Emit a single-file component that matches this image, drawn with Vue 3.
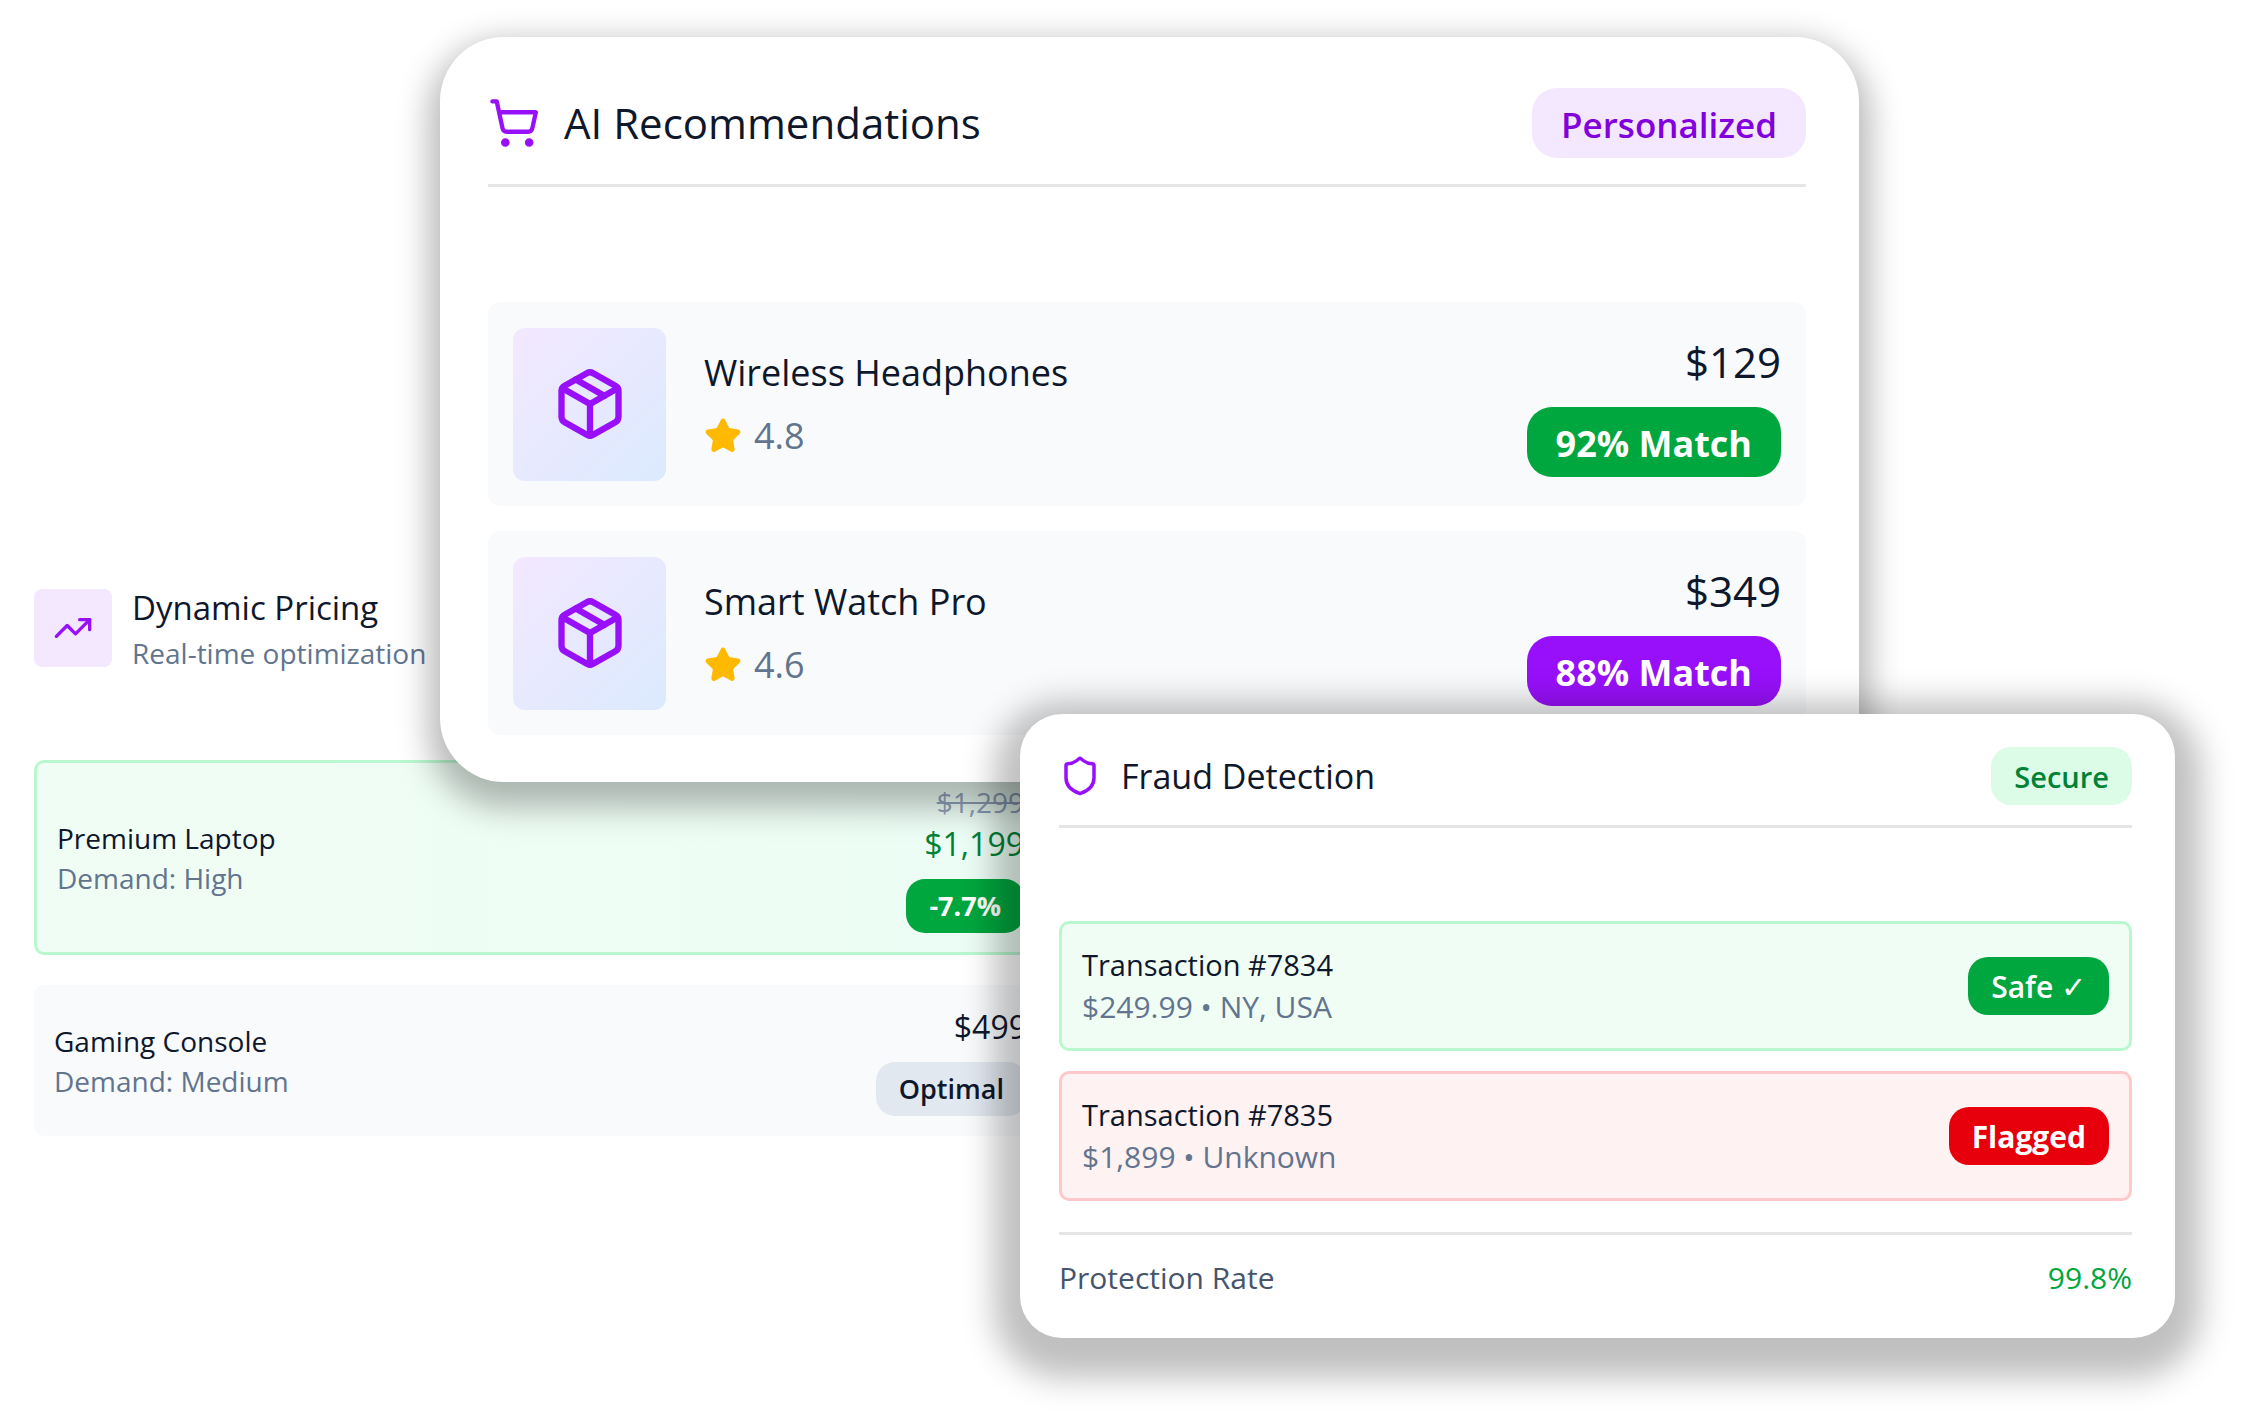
<script setup>
const products = [
  { name: 'Wireless Headphones', rating: '4.8', price: '$129', match: '92% Match', tone: 'green' },
  { name: 'Smart Watch Pro', rating: '4.6', price: '$349', match: '88% Match', tone: 'purple' },
]

const transactions = [
  { title: 'Transaction #7834', detail: '$249.99 • NY, USA', status: 'Safe', mark: '✓', row: 'safe', tone: 'green' },
  { title: 'Transaction #7835', detail: '$1,899 • Unknown', status: 'Flagged', mark: '', row: 'flagged', tone: 'red strong' },
]
</script>

<template>
  <main class="stage">
    <section class="pricing">
      <header class="pricing-head">
        <span class="pricing-icon">
          <svg viewBox="0 0 24 24" width="40" height="40" class="stroke" aria-hidden="true">
            <path d="M16 7h6v6" />
            <path d="m22 7-8.500 8.500-5-5L2 17" />
          </svg>
        </span>
        <div>
          <h2 class="pricing-title">Dynamic Pricing</h2>
          <p class="pricing-sub">Real-time optimization</p>
        </div>
      </header>

      <article class="offer offer-deal">
        <div>
          <h3 class="offer-name">Premium Laptop</h3>
          <p class="offer-demand">Demand: High</p>
        </div>
        <div class="offer-side">
          <del class="offer-old">$1,299</del>
          <span class="offer-price deal">$1,199</span>
          <span class="pill pill-small green strong">-7.7%</span>
        </div>
      </article>

      <article class="offer offer-plain">
        <div>
          <h3 class="offer-name">Gaming Console</h3>
          <p class="offer-demand">Demand: Medium</p>
        </div>
        <div class="offer-side">
          <span class="offer-price">$499</span>
          <span class="pill pill-small slate">Optimal</span>
        </div>
      </article>
    </section>

    <section class="card recs">
      <header class="recs-head">
        <svg viewBox="0 0 24 24" width="52" height="52" class="stroke" aria-hidden="true">
          <circle cx="8" cy="21" r="1" />
          <circle cx="19" cy="21" r="1" />
          <path d="M2.050 2.050h2l2.660 12.420a2 2 0 0 0 2 1.580h9.780a2 2 0 0 0 1.950-1.570l1.650-7.430H5.120" />
        </svg>
        <h2 class="recs-title">AI Recommendations</h2>
        <span class="pill pill-large lilac">Personalized</span>
      </header>

      <article v-for="p in products" :key="p.name" class="product">
        <span class="product-tile">
          <svg viewBox="0 0 24 24" width="76" height="76" class="stroke" aria-hidden="true">
            <path d="M11 21.730a2 2 0 0 0 2 0l7-4A2 2 0 0 0 21 16V8a2 2 0 0 0-1-1.730l-7-4a2 2 0 0 0-2 0l-7 4A2 2 0 0 0 3 8v8a2 2 0 0 0 1 1.730z" />
            <path d="M12 22V12" />
            <path d="M3.290 7 12 12l8.710-5" />
            <path d="m7.500 4.270 9 5.150" />
          </svg>
        </span>
        <div class="product-text">
          <h3 class="product-name">{{ p.name }}</h3>
          <p class="product-rating">
            <svg viewBox="0 0 24 24" width="38" height="38" class="star" aria-hidden="true">
              <path d="M11.525 2.295a.53.53 0 0 1 .95 0l2.310 4.679a2.123 2.123 0 0 0 1.595 1.160l5.166.756a.53.53 0 0 1 .294.904l-3.736 3.638a2.123 2.123 0 0 0-.611 1.878l.882 5.140a.53.53 0 0 1-.771.560l-4.618-2.428a2.122 2.122 0 0 0-1.973 0L6.396 21.010a.53.53 0 0 1-.770-.560l.881-5.139a2.122 2.122 0 0 0-.611-1.879L2.160 9.795a.53.53 0 0 1 .294-.906l5.165-.755a2.122 2.122 0 0 0 1.597-1.160z" />
            </svg>
            {{ p.rating }}
          </p>
        </div>
        <div class="product-side">
          <span class="product-price">{{ p.price }}</span>
          <span class="pill pill-large strong" :class="p.tone">{{ p.match }}</span>
        </div>
      </article>
    </section>

    <section class="card fraud">
      <header class="fraud-head">
        <svg viewBox="0 0 24 24" width="42" height="42" class="stroke" aria-hidden="true">
          <path d="M20 13c0 5-3.500 7.500-7.660 8.950a1 1 0 0 1-.670-.010C7.500 20.500 4 18 4 13V6a1 1 0 0 1 1-1c2 0 4.500-1.200 6.240-2.720a1.170 1.170 0 0 1 1.520 0C14.510 3.810 17 5 19 5a1 1 0 0 1 1 1z" />
        </svg>
        <h2 class="fraud-title">Fraud Detection</h2>
        <span class="pill pill-medium mint">Secure</span>
      </header>

      <article v-for="t in transactions" :key="t.title" class="transaction" :class="t.row">
        <div>
          <h3 class="transaction-title">{{ t.title }}</h3>
          <p class="transaction-detail">{{ t.detail }}</p>
        </div>
        <span class="pill pill-medium" :class="t.tone">{{ t.status }}<span v-if="t.mark" class="mark">&nbsp;{{ t.mark }}</span></span>
      </article>

      <footer class="fraud-foot">
        <span>Protection Rate</span>
        <span class="rate">99.8%</span>
      </footer>
    </section>
  </main>
</template>

<style>
body {
  margin: 0;
  background: #ffffff;
}
</style>

<style scoped>
.stage {
  display: grid;
  grid-template-columns: minmax(0, 1fr);
  align-items: start;
  min-height: 100vh;
  box-sizing: border-box;
  overflow: hidden;
  color: #0f172b;
  font-family: "Open Sans", "Noto Sans", sans-serif;
  white-space: nowrap;
}

/* The three panels share one grid cell and overlap in source order. */
.stage > section {
  grid-area: 1 / 1;
}

h2,
h3,
p {
  margin: 0;
  font-weight: 400;
}

svg {
  display: block;
  flex: none;
}

.stroke {
  fill: none;
  stroke: #9810fa;
  stroke-width: 2;
  stroke-linecap: round;
  stroke-linejoin: round;
}

.card {
  background: #ffffff;
}

.pill {
  display: block;
  flex: none;
  font-weight: 600;
}

.strong {
  font-weight: 700;
}

.pill-small {
  padding: 0 23px;
  border-radius: 19px;
  font-size: 27px;
  line-height: 54px;
}

.pill-medium {
  padding: 2px 23px 0;
  border-radius: 20px;
  font-size: 30px;
  line-height: 56px;
}

.pill-large {
  padding: 4px 29px 0;
  border-radius: 25px;
  font-size: 36px;
  line-height: 66px;
}

.mark {
  font-weight: 400;
}

.green {
  background: #00a63e;
  color: #ffffff;
}

.purple {
  background: #9810fa;
  color: #ffffff;
}

.red {
  background: #e7000b;
  color: #ffffff;
}

.slate {
  background: #e2e8f0;
  color: #0f172b;
}

.lilac {
  background: #f3e8ff;
  color: #8200db;
  font-size: 35px;
}

.mint {
  background: #dcfce7;
  color: #008236;
  font-size: 29px;
}

/* Dynamic pricing */
.pricing {
  margin: 582px 1196px 0 34px;
}

.pricing-head {
  display: flex;
  align-items: center;
  gap: 20px;
  margin-bottom: 86px;
}

.pricing-icon {
  display: grid;
  place-items: center;
  width: 78px;
  height: 78px;
  border-radius: 8px;
  background: #f3e8ff;
}

.pricing-title {
  padding-top: 2px;
  font-size: 33px;
  line-height: 48px;
}

.pricing-sub {
  color: #62748e;
  font-size: 28px;
  line-height: 42px;
}

.offer {
  display: flex;
  align-items: center;
  justify-content: space-between;
  padding: 20px;
  border-radius: 10px;
}

.offer-deal {
  margin-bottom: 30px;
  padding: 19px 20px;
  border: 3px solid #b9f8cf;
  background: linear-gradient(90deg, #f0fdf4, #ecfdf5);
}

.offer-plain {
  background: #f8fafc;
}

.offer-name,
.offer-demand {
  font-size: 28px;
  line-height: 40px;
}

.offer-demand {
  color: #62748e;
}

.offer-side {
  display: flex;
  flex-direction: column;
  align-items: flex-end;
}

.offer-old {
  color: #90a1b9;
  font-size: 28px;
  line-height: 40px;
}

.offer-price {
  margin-bottom: 13px;
  font-size: 32px;
  line-height: 44px;
}

.deal {
  color: #008236;
}

/* AI recommendations */
.recs {
  margin: 37px 384px 0 440px;
  padding: 51px 53px 47px 48px;
  border-radius: 64px;
  box-shadow: 0 15px 32px 11px rgba(0, 0, 0, 0.28);
}

.recs-head {
  display: flex;
  align-items: center;
  margin-bottom: 115px;
  padding-bottom: 26px;
  border-bottom: 3px solid #e5e5e5;
}

.recs-title {
  flex: 1;
  margin-left: 24px;
  font-size: 42px;
  line-height: 60px;
}

.product {
  display: flex;
  align-items: center;
  height: 204px;
  box-sizing: border-box;
  padding: 0 25px;
  border-radius: 12px;
  background: #f8fafc;
}

.product + .product {
  margin-top: 25px;
}

.product-tile {
  display: grid;
  place-items: center;
  width: 153px;
  height: 153px;
  border-radius: 12px;
  background: linear-gradient(135deg, #f3e8ff, #dbeafe);
}

.product-text {
  flex: 1;
  margin-left: 38px;
}

.product-name {
  font-size: 36px;
  line-height: 63px;
}

.product-rating {
  display: flex;
  align-items: center;
  gap: 12px;
  color: #62748e;
  font-size: 36px;
  line-height: 63px;
}

.star {
  fill: #ffb900;
  stroke: #ffb900;
  stroke-width: 2;
  stroke-linejoin: round;
}

.product-side {
  display: flex;
  flex-direction: column;
  align-items: flex-end;
  gap: 15px;
}

.product-price {
  font-size: 42px;
  line-height: 60px;
}

/* Fraud detection */
.fraud {
  margin: 714px 68px 0 1020px;
  padding: 33px 43px 38px 39px;
  border-radius: 42px;
  box-shadow: 0 14px 32px 26px rgba(0, 0, 0, 0.25);
}

.fraud-head {
  display: flex;
  align-items: center;
  margin-bottom: 93px;
  padding-bottom: 20px;
  border-bottom: 3px solid #e5e5e5;
}

.fraud-title {
  flex: 1;
  margin-left: 20px;
  font-size: 34px;
  line-height: 50px;
}

.transaction {
  display: flex;
  align-items: center;
  justify-content: space-between;
  height: 130px;
  box-sizing: border-box;
  padding: 0 20px;
  border: 3px solid;
  border-radius: 10px;
}

.transaction + .transaction {
  margin-top: 20px;
}

.safe {
  border-color: #b9f8cf;
  background: #f0fdf4;
}

.flagged {
  border-color: #ffc9c9;
  background: #fef2f2;
}

.transaction-title {
  font-size: 29px;
  line-height: 42px;
}

.transaction-detail {
  color: #62748e;
  font-size: 30px;
  line-height: 42px;
}

.fraud-foot {
  display: flex;
  justify-content: space-between;
  margin-top: 31px;
  padding-top: 21px;
  border-top: 3px solid #e5e5e5;
  color: #45556c;
  font-size: 30px;
  line-height: 44px;
}

.rate {
  color: #00a63e;
}
</style>
